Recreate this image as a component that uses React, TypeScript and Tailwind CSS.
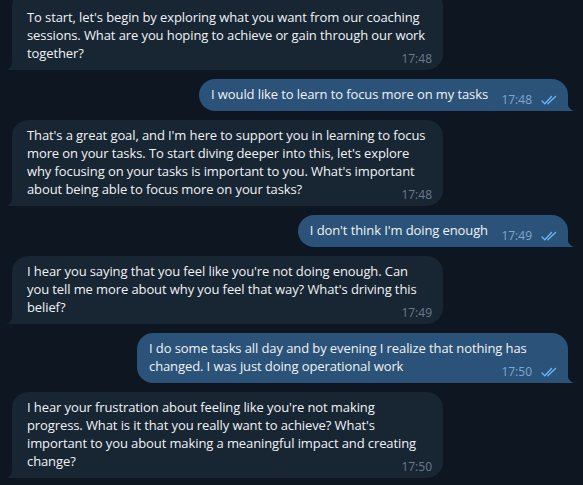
import React from "react";

const Checks = () => (
  <svg width="16" height="11" viewBox="0 0 16 11" fill="none" stroke="#6ab2f2" strokeWidth="1.4" strokeLinecap="round" strokeLinejoin="round">
    <path d="M1 6 L3.8 8.8 L10.5 1.5" />
    <path d="M6.8 8.8 L14.5 1.5" />
  </svg>
);

type Msg = { out: boolean; lines: string[]; time: string; wide: boolean };

const msgs: Msg[] = [
  {
    out: false,
    wide: true,
    time: "17:48",
    lines: [
      "To start, let's begin by exploring what you want from our coaching",
      "sessions. What are you hoping to achieve or gain through our work",
      "together?",
    ],
  },
  { out: true, wide: false, time: "17:48", lines: ["I would like to learn to focus more on my tasks"] },
  {
    out: false,
    wide: true,
    time: "17:48",
    lines: [
      "That's a great goal, and I'm here to support you in learning to focus",
      "more on your tasks. To start diving deeper into this, let's explore",
      "why focusing on your tasks is important to you. What's important",
      "about being able to focus more on your tasks?",
    ],
  },
  { out: true, wide: false, time: "17:49", lines: ["I don't think I'm doing enough"] },
  {
    out: false,
    wide: true,
    time: "17:49",
    lines: [
      "I hear you saying that you feel like you're not doing enough. Can",
      "you tell me more about why you feel that way? What's driving this",
      "belief?",
    ],
  },
  {
    out: true,
    wide: true,
    time: "17:50",
    lines: [
      "I do some tasks all day and by evening I realize that nothing has",
      "changed. I was just doing operational work",
    ],
  },
  {
    out: false,
    wide: true,
    time: "17:50",
    lines: [
      "I hear your frustration about feeling like you're not making",
      "progress. What is it that you really want to achieve? What's",
      "important to you about making a meaningful impact and creating",
      "change?",
    ],
  },
];

function Bubble({ m, first }: { m: Msg; first: boolean }) {
  const base = m.out
    ? "relative rounded-2xl rounded-br-none bg-[#2b5278] pl-[12px] pr-[11px] pb-[8px]"
    : "relative rounded-2xl rounded-bl-none bg-[#182533] pl-[15px] pr-[11px] pb-[8px]";
  const width = m.wide ? "w-[431px]" : "";
  const top = first ? "-mt-[10px] pt-[18px]" : "pt-[6px]";
  return (
    <div className={m.out ? "flex justify-end pr-[15px]" : "flex pl-[12px]"}>
      <div className={`${base} ${width} ${top}`}>
        <div className="text-[13px] leading-[18px] text-[#f0f3f6] whitespace-nowrap tracking-[-0.1px]">
          {m.lines.map((l, i) => (
            <React.Fragment key={i}>
              {l}
              {i < m.lines.length - 1 ? <br /> : null}
            </React.Fragment>
          ))}
          <span className={m.out ? "inline-block w-[69px]" : "inline-block w-[44px]"} />
        </div>
        <div className="absolute right-[11px] bottom-[3px] flex items-center text-[12px] leading-[16px]">
          <span className={m.out ? "text-[#7ea8d2]" : "text-[#6c7b8b]"}>{m.time}</span>
          {m.out ? (
            <span className="ml-[9px] flex items-center">
              <Checks />
            </span>
          ) : null}
        </div>
        {m.out ? (
          <svg className="absolute right-[-6px] bottom-0" width="7" height="12" viewBox="0 0 7 12">
            <path d="M0 0 Q0 10 7 12 H0 Z" fill="#2b5278" />
          </svg>
        ) : (
          <svg className="absolute left-[-6px] bottom-0" width="7" height="12" viewBox="0 0 7 12">
            <path d="M7 0 Q7 10 0 12 H7 Z" fill="#182533" />
          </svg>
        )}
      </div>
    </div>
  );
}

export default function App() {
  return (
    <div
      className="w-[583px] h-[485px] overflow-hidden bg-[#0e1621] flex flex-col gap-[9px]"
      style={{ fontFamily: "'Open Sans', 'Noto Sans', sans-serif" }}
    >
      {msgs.map((m, i) => (
        <Bubble key={i} m={m} first={i === 0} />
      ))}
    </div>
  );
}
